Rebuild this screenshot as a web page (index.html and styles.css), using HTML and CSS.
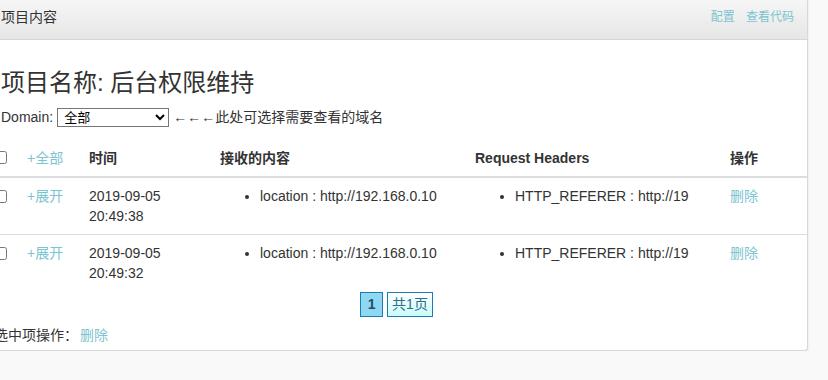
FILE: index.html
```html
<!DOCTYPE html>
<html lang="zh-CN">
<head>
    <meta charset="UTF-8">
    <title>项目内容</title>
    <link rel="stylesheet" href="styles.css">
</head>
<body>
    <div class="panel">
        <div class="panel-heading">
            <span class="panel-title">项目内容</span>
            <span class="panel-links">
                <a href="#">配置</a>
                <a href="#">查看代码</a>
            </span>
        </div>
        <div class="panel-body">
            <h2>项目名称: 后台权限维持</h2>
            <div class="domain-line">
                Domain:
                <select class="domain-select">
                    <option>全部</option>
                </select>
                <span class="tip">←←←此处可选择需要查看的域名</span>
            </div>

            <table class="content-table">
                <colgroup>
                    <col style="width: 33px">
                    <col style="width: 62px">
                    <col style="width: 131px">
                    <col style="width: 255px">
                    <col style="width: 255px">
                    <col style="width: 85px">
                </colgroup>
                <thead>
                    <tr>
                        <th><input type="checkbox" class="chk"></th>
                        <th><a href="#" class="link">+全部</a></th>
                        <th>时间</th>
                        <th>接收的内容</th>
                        <th>Request Headers</th>
                        <th>操作</th>
                    </tr>
                </thead>
                <tbody>
                    <tr>
                        <td><input type="checkbox" class="chk"></td>
                        <td><a href="#" class="link">+展开</a></td>
                        <td>2019-09-05<br>20:49:38</td>
                        <td><ul><li>location : http://192.168.0.10</li></ul></td>
                        <td><ul><li>HTTP_REFERER : http://19</li></ul></td>
                        <td><a href="#" class="link">删除</a></td>
                    </tr>
                    <tr>
                        <td><input type="checkbox" class="chk"></td>
                        <td><a href="#" class="link">+展开</a></td>
                        <td>2019-09-05<br>20:49:32</td>
                        <td><ul><li>location : http://192.168.0.10</li></ul></td>
                        <td><ul><li>HTTP_REFERER : http://19</li></ul></td>
                        <td><a href="#" class="link">删除</a></td>
                    </tr>
                </tbody>
            </table>

            <div class="pagination">
                <span class="page current">1</span>
                <span class="page total">共1页</span>
            </div>

            <div class="bulk">选中项操作：<a href="#" class="link">删除</a></div>
        </div>
    </div>
</body>
</html>
```

FILE: styles.css
```css
body {
    margin: 0;
    background: #f9f9f9;
    font-family: "Liberation Sans", Arial, "Noto Sans CJK SC", sans-serif;
    font-size: 14px;
    line-height: 20px;
    color: #333;
    overflow: hidden;
}
a {
    text-decoration: none;
}
.link {
    color: #7cc4cf;
}
.panel {
    width: 823px;
    margin-left: -15px;
    box-sizing: border-box;
    background: #fff;
    border: 1px solid #d8d8d8;
    border-top: 0;
    border-radius: 0 0 4px 4px;
    box-shadow: 0 1px 2px rgba(0,0,0,0.12);
}
.panel-heading {
    height: 39px;
    padding: 0 13px 0 15px;
    display: flex;
    align-items: center;
    justify-content: space-between;
    background: linear-gradient(#f6f6f6, #e6e6e6);
    border-bottom: 1px solid #d6d6d6;
    font-size: 14px;
}
.panel-title {
    margin-top: -5px;
}
.panel-links {
    margin-top: -5px;
    font-size: 12px;
}
.panel-links a {
    color: #7cc4cf;
    margin-left: 8px;
}
.panel-body {
    padding: 0 15px 5px 15px;
}
h2 {
    margin: 29px 0 0;
    font-size: 24px;
    line-height: 27px;
    font-weight: normal;
    color: #333;
}
.domain-line {
    margin-top: 11px;
    height: 20px;
    display: flex;
    align-items: center;
}
.domain-select {
    width: 112px;
    height: 19px;
    margin: 0 4px 0 4px;
    padding: 0 2px;
    border: 1px solid #767676;
    border-radius: 0;
    background: #fff;
    font-family: "Liberation Sans", "Noto Sans CJK SC", sans-serif;
    font-size: 13px;
    color: #000;
}
.tip {
    font-size: 14px;
}
.content-table {
    margin: 13px 0 0 -15px;
    width: 821px;
    table-layout: fixed;
    border-collapse: separate;
    border-spacing: 0;
}
.content-table th,
.content-table td {
    padding: 8px;
    text-align: left;
    vertical-align: top;
    white-space: nowrap;
    overflow: hidden;
}
.content-table th {
    font-weight: bold;
    border-bottom: 2px solid #ddd;
}
.content-table th .link {
    font-weight: normal;
}
.content-table tbody tr + tr td {
    border-top: 1px solid #ddd;
}
.content-table ul {
    margin: 0;
    padding-left: 40px;
}
.chk {
    margin: 0;
    width: 13px;
    height: 13px;
    vertical-align: -2px;
}
.content-table th .chk {
    vertical-align: -1px;
}
.pagination {
    margin-top: 1px;
    text-align: center;
    font-size: 0;
}
.page {
    display: inline-block;
    height: 23px;
    line-height: 23px;
    border: 1px solid #1c7bb5;
    font-size: 14px;
    vertical-align: top;
    margin: 0 2px;
}
.current {
    width: 21px;
    background: #8fd8f2;
    font-weight: bold;
    color: #1f4f6a;
}
.total {
    padding: 0 4px;
    background: linear-gradient(#ffffff, #c9fbfb);
    color: #2f6f86;
}
.bulk {
    margin: 8px 0 0 -7px;
}
.bulk .link {
    margin-left: 2px;
}
```
